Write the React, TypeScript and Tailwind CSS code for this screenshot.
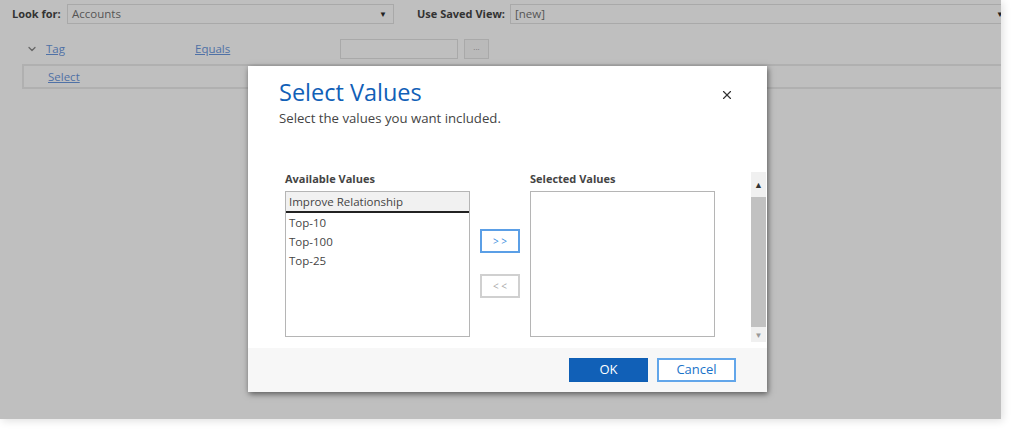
import { ChevronDown, X } from 'lucide-react';

const font = { fontFamily: '"Open Sans", "Noto Sans", sans-serif' };

function ListBox({ items }: { items: string[] }) {
  return (
    <div className="h-[146px] w-[185px] border border-[#b5b5b5] bg-white">
      {items.map((item, i) => (
        <div
          key={item}
          className={`h-[19px] pl-[3px] text-[11.5px] leading-[19px] text-[#444] ${
            i === 0 ? 'h-[21px] border-b-2 border-[#222] bg-[#f1f1f1] leading-[20px]' : ''
          }`}
        >
          {item}
        </div>
      ))}
    </div>
  );
}

function SelectValuesDialog() {
  return (
    <div className="absolute left-[248px] top-[66px] flex h-[326px] w-[519px] flex-col bg-white shadow-[1px_2px_6px_rgba(0,0,0,0.55)]">
      {/* Header */}
      <div className="flex items-start justify-between pl-[31px] pr-[33px] pt-[10px]">
        <div>
          <h1 className="text-[23.5px] leading-[32px] text-[#1160b7]">Select Values</h1>
          <p className="mt-[1px] text-[13.2px] leading-[18px] text-[#444]">
            Select the values you want included.
          </p>
        </div>
        <button className="mt-[12px] text-[#333]">
          <X size={14} strokeWidth={2} />
        </button>
      </div>

      {/* Body */}
      <div className="mt-[45px] flex h-[170px]">
        <div className="flex flex-1 pl-[37px]">
          <div className="flex flex-col">
            <div className="h-[19px] text-[11px] font-bold leading-[14px] text-[#444]">
              Available Values
            </div>
            <ListBox items={['Improve Relationship', 'Top-10', 'Top-100', 'Top-25']} />
          </div>
          <div className="mx-[10px] flex flex-col gap-[21px] pt-[57px]">
            <button className="h-[24px] w-[40px] border-2 border-[#5b9fe6] bg-white text-[10px] leading-none text-[#3b8ee0]">
              &gt; &gt;
            </button>
            <button className="h-[24px] w-[40px] border-2 border-[#d0d0d0] bg-white text-[10px] leading-none text-[#aaa]">
              &lt; &lt;
            </button>
          </div>
          <div className="flex flex-col">
            <div className="h-[19px] text-[11px] font-bold leading-[14px] text-[#444]">
              Selected Values
            </div>
            <ListBox items={[]} />
          </div>
        </div>
        {/* Scrollbar */}
        <div className="mr-[1px] flex w-[15px] flex-col bg-[#f0f0f0]">
          <div className="flex h-[25px] items-center justify-center text-[9px] text-[#333]">▲</div>
          <div className="flex-1 bg-[#c1c1c1]" />
          <div className="flex h-[15px] items-center justify-center text-[8px] text-[#999]">▼</div>
        </div>
      </div>

      {/* Footer */}
      <div className="mt-[6px] flex flex-1 justify-end gap-[9px] bg-[#f7f7f7] pr-[31px] pt-[10px]">
        <button className="h-[24px] w-[79px] border border-[#0f5fb5] bg-[#1160b7] text-[13px] text-white">
          OK
        </button>
        <button className="h-[24px] w-[79px] border-2 border-[#62a6ea] bg-white text-[13px] text-[#1a73c9]">
          Cancel
        </button>
      </div>
    </div>
  );
}

export default function App() {
  return (
    <div className="h-[433px] w-[1016px] overflow-hidden bg-white" style={font}>
      <div className="relative h-[419px] w-[1001px] overflow-hidden bg-[#bfbfbf] shadow-[2px_2px_8px_rgba(0,0,0,0.12)]">
        {/* Search bar */}
        <div className="flex items-center pl-[12px] pt-[4px]">
          <span className="w-[55px] text-[11px] font-bold text-[#333]">Look for:</span>
          <div className="flex h-[20px] w-[327px] items-center justify-between border border-[#a9a9a9] pl-[4px] pr-[6px] text-[11.5px] text-[#555]">
            <span>Accounts</span>
            <span className="text-[8px] text-[#222]">▼</span>
          </div>
          <span className="ml-[23px] w-[93px] text-[11px] font-bold text-[#333]">Use Saved View:</span>
          <div className="flex h-[20px] flex-1 items-center justify-between border border-r-0 border-[#a9a9a9] pl-[4px] text-[11.5px] text-[#555]">
            <span>[new]</span>
            <span className="-mr-[3px] text-[8px] text-[#222]">▼</span>
          </div>
        </div>

        {/* Condition row */}
        <div className="mt-[15px] flex h-[20px] items-center">
          <ChevronDown className="ml-[26px] text-[#666]" size={12} strokeWidth={2.5} />
          <a className="ml-[8px] w-[149px] text-[11.5px] text-[#4f71a6] underline">Tag</a>
          <a className="w-[145px] text-[11.5px] text-[#4f71a6] underline">Equals</a>
          <div className="h-[20px] w-[118px] border border-[#a9a9a9]" />
          <div className="ml-[6px] flex h-[20px] w-[25px] items-start justify-center border border-[#a9a9a9] bg-[#bababa] text-[8px] leading-[14px] text-[#777]">
            ...
          </div>
        </div>

        {/* Select row */}
        <div className="ml-[22px] mt-[5px] flex h-[25px] items-center border-y-2 border-l-2 border-[#b0b0b0] pl-[24px]">
          <a className="text-[11.5px] text-[#4f71a6] underline">Select</a>
        </div>

        <SelectValuesDialog />
      </div>
    </div>
  );
}
